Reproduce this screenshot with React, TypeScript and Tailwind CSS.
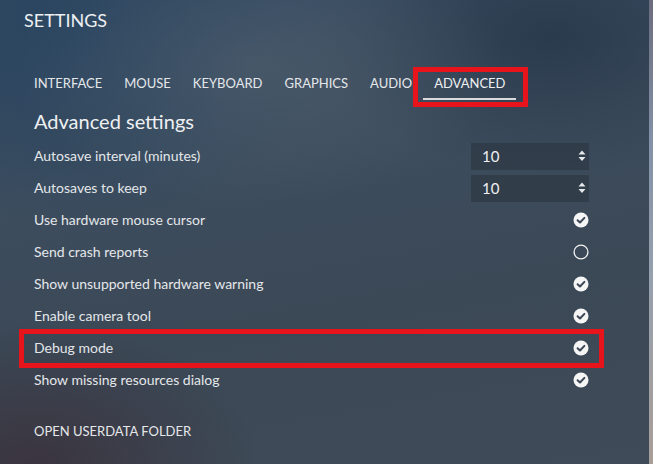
import React from "react"

const tabs = ["INTERFACE", "MOUSE", "KEYBOARD", "GRAPHICS", "AUDIO", "ADVANCED"]

type Row =
  | { label: string; kind: "number"; value: number }
  | { label: string; kind: "check"; checked: boolean; marked?: boolean }

const rows: Row[] = [
  { label: "Autosave interval (minutes)", kind: "number", value: 10 },
  { label: "Autosaves to keep", kind: "number", value: 10 },
  { label: "Use hardware mouse cursor", kind: "check", checked: true },
  { label: "Send crash reports", kind: "check", checked: false },
  { label: "Show unsupported hardware warning", kind: "check", checked: true },
  { label: "Enable camera tool", kind: "check", checked: true },
  { label: "Debug mode", kind: "check", checked: true, marked: true },
  { label: "Show missing resources dialog", kind: "check", checked: true },
]

function CheckCircle({ checked }: { checked: boolean }) {
  if (!checked) {
    return (
      <svg width="16" height="16" viewBox="0 0 16 16" className="block">
        <circle cx="8" cy="8" r="6.9" fill="none" stroke="#f2f2f2" strokeWidth="1.3" />
      </svg>
    )
  }
  return (
    <svg width="16" height="16" viewBox="0 0 16 16" className="block">
      <circle cx="8" cy="8" r="7.5" fill="#f5f5f5" />
      <path d="M4.6 8.2 L7 10.5 L11.4 5.9" fill="none" stroke="#3b4756" strokeWidth="2" strokeLinecap="round" strokeLinejoin="round" />
    </svg>
  )
}

function Spinner() {
  return (
    <svg width="8" height="12" viewBox="0 0 8 12" className="block">
      <path d="M4 0.5 L7.5 4.5 L0.5 4.5 Z" fill="#e6e8ea" />
      <path d="M0.5 7 L7.5 7 L4 11 Z" fill="#e6e8ea" />
    </svg>
  )
}

export default function App() {
  return (
    <div
      className="w-[653px] h-[464px] flex overflow-hidden text-[#e4e7ea]"
      style={{ fontFamily: "Lato, 'Open Sans', sans-serif" }}
    >
      <div className="flex-1 relative bg-[radial-gradient(ellipse_38%_30%_at_40%_14%,rgba(82,96,110,0.6)_0%,transparent_100%),radial-gradient(ellipse_35%_30%_at_5%_100%,rgba(58,50,60,0.9)_0%,transparent_100%),radial-gradient(ellipse_35%_30%_at_85%_8%,rgba(40,56,74,0.85)_0%,transparent_100%),radial-gradient(ellipse_40%_45%_at_12%_5%,rgba(40,68,96,0.9)_0%,transparent_100%),linear-gradient(170deg,#344a62_0%,#3d4d5e_35%,#3b4856_65%,#3f4b58_100%)]">
        <h1 className="pl-[24px] pt-[8px] text-[18px] leading-6 text-[#eef0f2]">SETTINGS</h1>

        <div className="pl-[34px] pr-[60px]">
          <div className="flex -ml-[11px] mt-[41px]">
            {tabs.map((t) => {
              const active = t === "ADVANCED"
              return (
                <div
                  key={t}
                  className={
                    active
                      ? "relative px-[11px] pb-[5px] text-[13px] leading-5 text-[#eef0f2] border-b-2 border-[#d8dadc]"
                      : "relative px-[11px] pb-[5px] text-[13px] leading-5 text-[#e4e7ea] border-b-2 border-transparent"
                  }
                >
                  {t}
                  {active && (
                    <div className="absolute -top-[6px] -left-[10px] -right-[12px] -bottom-[9px] border-[5px] border-[#e8141c]" />
                  )}
                </div>
              )
            })}
          </div>

          <h2 className="mt-[7px] text-[20px] leading-7 text-[#eef0f2]">Advanced settings</h2>

          <div className="mt-[5px] flex flex-col">
            {rows.map((r) => (
              <div key={r.label} className="relative h-[32px] flex items-center justify-between text-[14px] leading-5">
                <span>{r.label}</span>
                {r.kind === "number" ? (
                  <div className="w-[118px] h-[27px] bg-[#2f3a46]/80 flex items-center justify-between pl-[11px] pr-[3px]">
                    <span className="text-[15px] text-[#eef0f2]">{r.value}</span>
                    <Spinner />
                  </div>
                ) : (
                  <div className="mr-[0.5px]">
                    <CheckCircle checked={r.checked} />
                  </div>
                )}
                {r.kind === "check" && r.marked && (
                  <div className="absolute -top-[3px] -bottom-[4px] -left-[15px] -right-[15px] border-[5px] border-[#e8141c]" />
                )}
              </div>
            ))}
          </div>

          <div className="mt-[25px] text-[13px] leading-5">OPEN USERDATA FOLDER</div>
        </div>
      </div>
      <div className="w-[4px] bg-[linear-gradient(to_bottom,#6b6c7e_0%,#8390a6_30%,#96a0ae_60%,#a89e98_100%)]" />
    </div>
  )
}
